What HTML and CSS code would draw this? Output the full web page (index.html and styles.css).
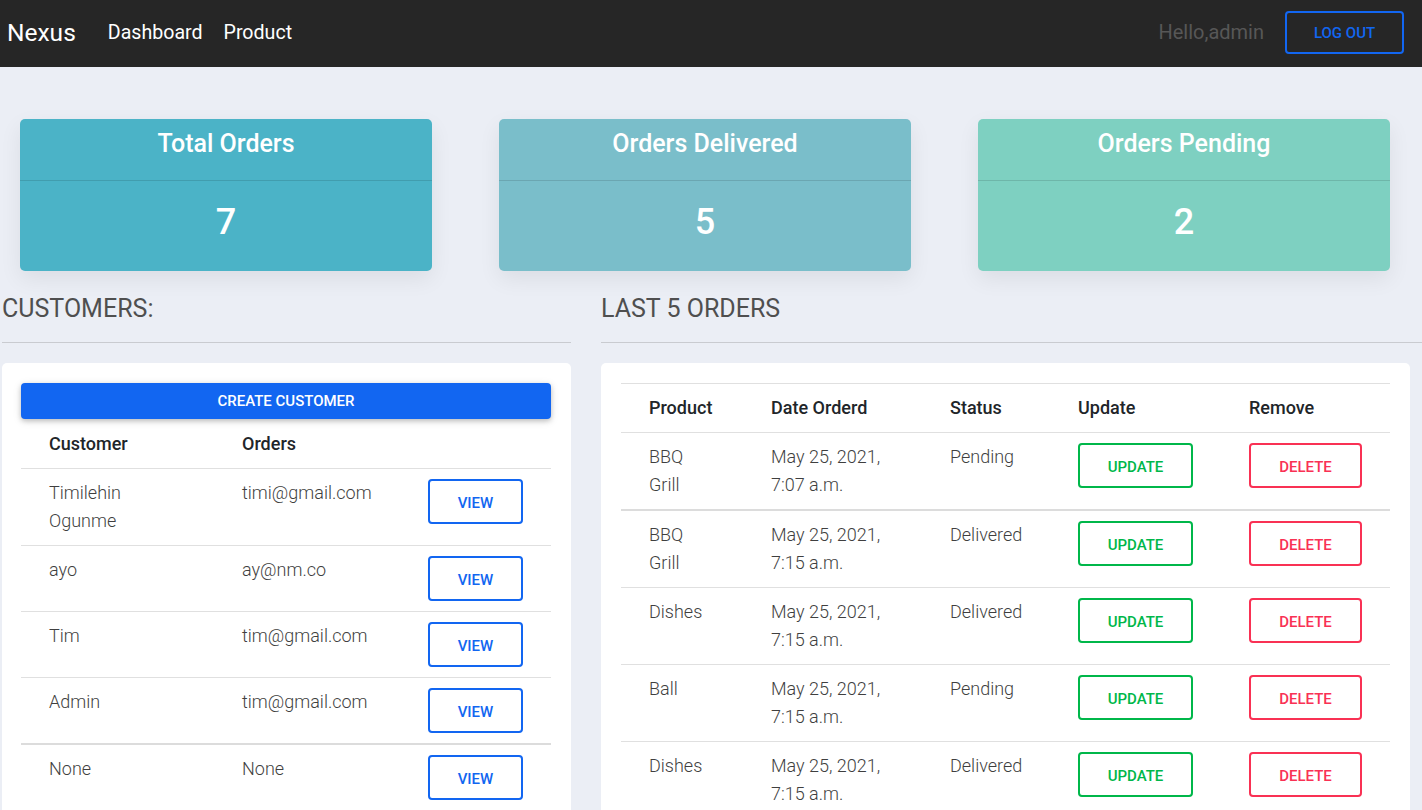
FILE: index.html
```html
<!DOCTYPE html>
<html lang="en">
<head>
<meta charset="utf-8">
<title>Nexus</title>
<link rel="stylesheet" href="styles.css">
</head>
<body>
<nav class="navbar">
  <div class="nav-left">
    <span class="brand">Nexus</span>
    <a class="nav-link">Dashboard</a>
    <a class="nav-link">Product</a>
  </div>
  <div class="nav-right">
    <span class="hello">Hello,admin</span>
    <button class="btn btn-outline-primary btn-logout">Log out</button>
  </div>
</nav>

<main class="main">
  <section class="stats">
    <div class="stat stat-total">
      <div class="stat-head">Total Orders</div>
      <div class="stat-body">7</div>
    </div>
    <div class="stat stat-delivered">
      <div class="stat-head">Orders Delivered</div>
      <div class="stat-body">5</div>
    </div>
    <div class="stat stat-pending">
      <div class="stat-head">Orders Pending</div>
      <div class="stat-body">2</div>
    </div>
  </section>

  <section class="panels">
    <div class="panel panel-left">
      <h5 class="panel-title">CUSTOMERS:</h5>
      <hr class="rule">
      <div class="card card-customers">
        <button class="btn btn-primary btn-block">Create Customer</button>
        <table class="table table-customers">
          <colgroup><col class="c1"><col class="c2"><col class="c3"></colgroup>
          <thead>
            <tr><th>Customer</th><th>Orders</th><th></th></tr>
          </thead>
          <tbody>
            <tr><td>Timilehin Ogunme</td><td>timi@gmail.com</td><td><button class="btn btn-outline-primary btn-view">View</button></td></tr>
            <tr><td>ayo</td><td>ay@nm.co</td><td><button class="btn btn-outline-primary btn-view">View</button></td></tr>
            <tr><td>Tim</td><td>tim@gmail.com</td><td><button class="btn btn-outline-primary btn-view">View</button></td></tr>
            <tr class="thick"><td>Admin</td><td>tim@gmail.com</td><td><button class="btn btn-outline-primary btn-view">View</button></td></tr>
            <tr><td>None</td><td>None</td><td><button class="btn btn-outline-primary btn-view">View</button></td></tr>
          </tbody>
        </table>
      </div>
    </div>

    <div class="panel panel-right">
      <h5 class="panel-title">LAST 5 ORDERS</h5>
      <hr class="rule">
      <div class="card card-orders">
        <table class="table table-orders">
          <colgroup><col class="o1"><col class="o2"><col class="o3"><col class="o4"><col class="o5"></colgroup>
          <thead>
            <tr><th>Product</th><th>Date Orderd</th><th>Status</th><th>Update</th><th>Remove</th></tr>
          </thead>
          <tbody>
            <tr class="thick"><td>BBQ Grill</td><td>May 25, 2021, 7:07 a.m.</td><td>Pending</td><td><button class="btn btn-outline-success btn-update">Update</button></td><td><button class="btn btn-outline-danger btn-delete">Delete</button></td></tr>
            <tr><td>BBQ Grill</td><td>May 25, 2021, 7:15 a.m.</td><td>Delivered</td><td><button class="btn btn-outline-success btn-update">Update</button></td><td><button class="btn btn-outline-danger btn-delete">Delete</button></td></tr>
            <tr><td>Dishes</td><td>May 25, 2021, 7:15 a.m.</td><td>Delivered</td><td><button class="btn btn-outline-success btn-update">Update</button></td><td><button class="btn btn-outline-danger btn-delete">Delete</button></td></tr>
            <tr><td>Ball</td><td>May 25, 2021, 7:15 a.m.</td><td>Pending</td><td><button class="btn btn-outline-success btn-update">Update</button></td><td><button class="btn btn-outline-danger btn-delete">Delete</button></td></tr>
            <tr><td>Dishes</td><td>May 25, 2021, 7:15 a.m.</td><td>Delivered</td><td><button class="btn btn-outline-success btn-update">Update</button></td><td><button class="btn btn-outline-danger btn-delete">Delete</button></td></tr>
          </tbody>
        </table>
      </div>
    </div>
  </section>
</main>
</body>
</html>
```

FILE: styles.css
```css
* { box-sizing: border-box; }

html, body {
  margin: 0;
  padding: 0;
}

body {
  font-family: Roboto, "Liberation Sans", Arial, sans-serif;
  font-weight: 300;
  font-size: 18px;
  color: #4f4f4f;
  background: #ebeef5;
  overflow: hidden;
}

/* Navbar */
.navbar {
  height: 67px;
  background: #262626;
  display: flex;
  align-items: center;
  justify-content: space-between;
  padding: 0 18px 0 7px;
}

.nav-left {
  display: flex;
  align-items: center;
}

.brand {
  font-size: 24.5px;
  font-weight: 400;
  color: #ffffff;
  margin-right: 32px;
  line-height: 1;
}

.nav-link {
  font-size: 19.6px;
  font-weight: 400;
  color: #ffffff;
  margin-right: 21px;
  margin-top: -3px;
}

.nav-right {
  display: flex;
  align-items: center;
}

.hello {
  font-size: 20px;
  font-weight: 400;
  color: #575757;
  margin-right: 21px;
  margin-top: -3px;
}

/* Buttons */
.btn {
  font-family: Roboto, "Liberation Sans", Arial, sans-serif;
  font-size: 15px;
  font-weight: 500;
  text-transform: uppercase;
  border-radius: 4px;
  background: transparent;
  cursor: pointer;
  padding: 0;
  display: inline-flex;
  align-items: center;
  justify-content: center;
}

.btn-outline-primary {
  border: 2px solid #1266f1;
  color: #1266f1;
}

.btn-outline-success {
  border: 2px solid #00b74a;
  color: #00b74a;
}

.btn-outline-danger {
  border: 2px solid #f93154;
  color: #f93154;
}

.btn-logout {
  width: 119px;
  height: 43px;
  margin-top: -3px;
  padding-top: 2px;
}

.btn-primary {
  border: none;
  background: #1266f1;
  color: #ffffff;
  box-shadow: 0 2px 5px 0 rgba(0,0,0,.2), 0 2px 10px 0 rgba(0,0,0,.1);
}

.btn-block {
  width: 100%;
  height: 36px;
}

.btn-view { width: 95px; height: 45px; padding-top: 2px; }
.btn-update { width: 115px; height: 45px; padding-top: 2px; }
.btn-delete { width: 113px; height: 45px; padding-top: 2px; }

/* Stats */
.main {
  padding-top: 52px;
}

.stats {
  display: grid;
  grid-template-columns: repeat(3, 412px);
  column-gap: 67px;
  padding-left: 20px;
}

.stat {
  height: 152px;
  border-radius: 5px;
  color: #ffffff;
  box-shadow: 0 8px 22px rgba(0, 0, 0, 0.07);
  display: flex;
  flex-direction: column;
}

.stat-total { background: #4bb3c7; }
.stat-delivered { background: #7abeca; }
.stat-pending { background: #7ed0c1; }

.stat-head {
  height: 62px;
  border-bottom: 1px solid rgba(0, 0, 0, 0.12);
  font-size: 25px;
  font-weight: 500;
  text-align: center;
  padding-top: 10px;
  line-height: 30px;
}

.stat-body {
  flex: 1;
  display: flex;
  align-items: center;
  justify-content: center;
  font-size: 36px;
  font-weight: 500;
  padding-bottom: 9px;
}

/* Panels */
.panels {
  display: grid;
  grid-template-columns: 569px 821px;
  column-gap: 30px;
  padding-left: 2px;
  margin-top: 22px;
}

.panel-title {
  margin: 0;
  font-size: 25px;
  font-weight: 400;
  line-height: 29px;
  color: #4f4f4f;
  position: relative;
  top: 1px;
}

.rule {
  margin: 20px 0 20px;
  border: 0;
  border-top: 1px solid #c9cbd0;
  height: 0;
}

.card {
  background: #ffffff;
  border-radius: 5px;
  padding: 20px 20px 20px 19px;
  min-height: 460px;
}

.card-orders {
  width: 809px;
  padding: 20px 20px;
}

/* Tables */
.table {
  width: 100%;
  border-collapse: collapse;
  table-layout: fixed;
}

.table th {
  text-align: left;
  font-weight: 500;
  color: #212529;
  padding: 10px 28px;
  line-height: 28px;
  font-size: 18px;
}

.table-customers th {
  padding-top: 11px;
}

.table td {
  text-align: left;
  vertical-align: top;
  padding: 10px 28px 10px;
  line-height: 28px;
  font-weight: 300;
  color: #3f3f3f;
}

.table tbody tr {
  border-top: 1px solid #e0e0e0;
}

.table tbody tr:last-child {
  border-bottom: 1px solid #e0e0e0;
}

.table tbody tr.thick + tr {
  border-top: 2px solid #dcdcdc;
}

.table-orders {
  border-top: 1px solid #e0e0e0;
}

.c1 { width: 193px; }
.c2 { width: 186px; }
.c3 { width: 151px; }

.o1 { width: 122px; }
.o2 { width: 179px; }
.o3 { width: 128px; }
.o4 { width: 171px; }
.o5 { width: 169px; }
```
